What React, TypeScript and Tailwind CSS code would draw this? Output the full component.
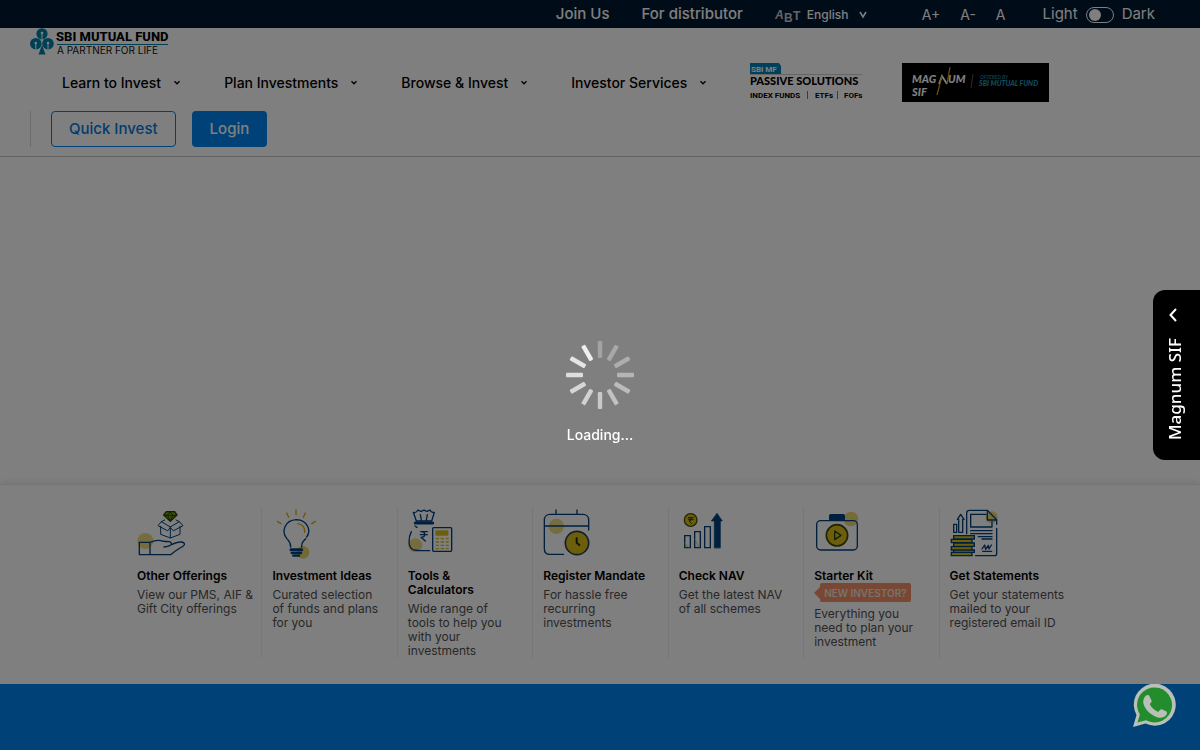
import type { ReactNode } from "react";

const NAVY = "#00407c";
const GOLD = "#d8bc14";

function Glyph({ viewBox, children }: { viewBox: string; children: ReactNode }) {
  return (
    <svg
      viewBox={viewBox}
      className="mb-3 block h-[50px] w-[50px] overflow-visible"
      fill="none"
      stroke={NAVY}
      strokeWidth="4"
      strokeLinecap="round"
      strokeLinejoin="round"
      aria-hidden="true"
    >
      {children}
    </svg>
  );
}

function OfferingsIcon() {
  return (
    <Glyph viewBox="21 24 150 150">
      <circle cx="46" cy="126" r="24" fill={GOLD} opacity=".55" stroke="none" />
      <path d="M28 130h32v37H28zM60 130c12-5 22-8 32-5 6 3 10 2 26 3 8 1 8 10 1 12-5 2-11 4-17 4M122 138c12-6 22-10 33-9 9 2 11 7 5 12-10 6-25 15-38 26H60" />
      <path d="M92 82v24l29 11 29-11V82M121 86v30M121 84L94 68 84 80l28 15zM121 84l27-16 11 12-28 15zM94 68l10-5M148 68l-10-5" strokeWidth="3" />
      <path d="M109 38h25l7 10-20 19-20-19z" fill="#7c9c10" stroke="#26400c" />
      <path d="M103 49h37M113 49l8 16 8-16-8-9z" stroke="#26400c" strokeWidth="3" />
    </Glyph>
  );
}

function IdeasIcon() {
  return (
    <Glyph viewBox="426 24 150 150">
      <circle cx="519" cy="160" r="19" fill={GOLD} opacity=".65" stroke="none" />
      <path d="M498 33v14M470 42l6 13M526 42l-6 13M442 67l11 7M556 67l-11 7" stroke="#e0a810" />
      <path d="M482 144c1-14-6-19-12-26-16-20-7-54 29-56 35 2 45 33 31 52M527 119c-8 8-13 13-12 25" />
      <path d="M503 74c14 2 22 11 21 26" stroke="#e0a810" />
      <path d="M483 152h32" strokeWidth="9" />
      <path d="M485 162h28" strokeWidth="7" />
      <path d="M490 170h17" strokeWidth="7" />
    </Glyph>
  );
}

function ToolsIcon() {
  return (
    <Glyph viewBox="21 24 150 150">
      <circle cx="43" cy="139" r="21" fill={GOLD} opacity=".55" stroke="none" />
      <path d="M46 66l-9-26c7 3 11-2 14-7 6 5 12 5 18 0 6 5 12 5 18 0 2 5 6 9 13 7l-8 26zM58 47l3 16M79 47l-3 16" />
      <path d="M43 72h52" strokeWidth="9" />
      <path d="M42 81l6 4M31 98c-9 18-10 43 2 52 6 6 20 5 53 5" />
      <path d="M59 98h20M58 107h21M60 98c15 0 15 16 0 17l13 11" />
      <rect x="95" y="86" width="57" height="71" rx="3" />
      <path d="M103 94h39v16h-39z" fill={GOLD} stroke="none" />
      <path d="M104 119h39M104 129h39M104 139h39M104 149h39" stroke={GOLD} strokeDasharray="10 5" strokeLinecap="butt" />
    </Glyph>
  );
}

function MandateIcon() {
  return (
    <Glyph viewBox="426 24 150 150">
      <circle cx="466" cy="82" r="23" fill={GOLD} opacity=".55" stroke="none" />
      <path d="M488 166h-41c-10 0-17-6-17-17V63c0-10 7-17 17-17h99c10 0 17 7 17 17v30M430 81h133M465 33v13M528 33v13" />
      <circle cx="528" cy="132" r="35" fill={GOLD} stroke="#20405c" strokeWidth="5" />
      <path d="M527 118v13l8 7" stroke="#103020" strokeWidth="6" />
    </Glyph>
  );
}

function NavIcon() {
  return (
    <Glyph viewBox="21 24 150 150">
      <circle cx="56" cy="63" r="19" fill={GOLD} stroke="#405010" />
      <path d="M49 56h15M49 62h15M51 56c11 0 11 9 0 10l8 8" stroke="#283c10" strokeWidth="3" />
      <path d="M38 110h17v36H38zM68 98h17v48H68zM98 83h17v63H98z" strokeLinejoin="miter" />
      <path d="M38 132l12 13M68 120l12 24" stroke={GOLD} opacity=".5" />
      <path d="M127 146V66h-9l17-23 16 23h-6v80z" fill={NAVY} strokeWidth="2" />
    </Glyph>
  );
}

function KitIcon() {
  return (
    <Glyph viewBox="429 24 150 150">
      <circle cx="540" cy="60" r="22" fill={GOLD} opacity=".6" stroke="none" />
      <rect x="476" y="47" width="44" height="17" rx="3" fill={NAVY} />
      <rect x="437" y="65" width="122" height="88" rx="12" />
      <circle cx="498" cy="109" r="32" fill={GOLD} stroke="#40480c" strokeWidth="5" />
      <path d="M491 96v26l19-13z" stroke="#283c10" />
    </Glyph>
  );
}

function StatementIcon() {
  return (
    <Glyph viewBox="54 24 150 150">
      <circle cx="179" cy="55" r="18" fill={GOLD} opacity=".6" stroke="none" />
      <path d="M104 104V42c0-5 3-8 8-8h54l28 28v14M194 88v76c0 4-3 6-6 6h-57M166 35v28h27" />
      <path d="M162 46h-46v38h64V68M116 95h64M116 104h64M139 113h41M150 120h30M152 157h27M150 150l8-12 3 13 8-12 2 11 7-12" />
      <path d="M65 76h9v24h-9zM80 100V61h-4l10-15 10 15h-4v39z" />
      <path d="M65 110h62v10H65zM58 121h62v10H58zM65 132h62v10H65zM58 143h62v10H58zM65 153h62v7H65zM58 160h62v10H58z" fill={GOLD} strokeLinejoin="miter" />
    </Glyph>
  );
}

type Card = { title: string; text: string; icon: () => ReactNode; badge?: string };

const cards: Card[] = [
  { title: "Other Offerings", text: "View our PMS, AIF & Gift City offerings", icon: OfferingsIcon },
  { title: "Investment Ideas", text: "Curated selection of\u00a0funds and plans for\u00a0you", icon: IdeasIcon },
  { title: "Tools & Calculators", text: "Wide range of tools\u00a0to help you with your investments", icon: ToolsIcon },
  { title: "Register Mandate", text: "For hassle free recurring investments", icon: MandateIcon },
  { title: "Check NAV", text: "Get the latest NAV of\u00a0all schemes", icon: NavIcon },
  { title: "Starter Kit", text: "Everything you need\u00a0to plan your investment", icon: KitIcon, badge: "NEW INVESTOR?" },
  { title: "Get Statements", text: "Get your statements mailed to your registered email\u00a0ID", icon: StatementIcon },
];

const menu = ["Learn to Invest", "Plan Investments", "Browse & Invest", "Investor Services"];

const spokes = [0.28, 0.32, 0.36, 0.42, 0.48, 0.52, 0.58, 0.64, 0.68, 0.74, 0.8, 0.88];

function Chevron() {
  return (
    <svg viewBox="0 0 8 6" className="h-[6px] w-2" fill="none" stroke="currentColor" strokeWidth="1.3" aria-hidden="true">
      <path d="M1.5 1.2L4 3.800l2.500-2.600" />
    </svg>
  );
}

function TopBar() {
  return (
    <div className="flex h-7 items-center justify-end bg-[#001830] pt-px pr-[45px] text-[15px] text-white">
      <a href="#join" className="mr-8 font-medium">Join Us</a>
      <a href="#distributor" className="mr-8 font-medium">For distributor</a>
      <svg viewBox="0 0 26 20" className="mr-[6px] h-5 w-[26px]" fill="#c8c8c8" aria-hidden="true">
        <g fontFamily="Liberation Sans" fontWeight="700" fontSize="12">
          <text x="0" y="14" fontStyle="italic">A</text>
          <text x="9" y="17">B</text>
          <text x="18" y="15">T</text>
        </g>
      </svg>
      <label className="relative mr-[55px] flex items-center font-medium">
        <span className="sr-only">Language</span>
        <select className="h-6 w-[60px] appearance-none bg-transparent text-xs text-white outline-none" defaultValue="English">
          <option>English</option>
        </select>
        <svg viewBox="0 0 8 8" className="pointer-events-none absolute right-0 h-2 w-2" fill="none" stroke="currentColor" strokeWidth="1.5" aria-hidden="true">
          <path d="M1 1l3 5 3-5" />
        </svg>
      </label>
      <div className="mr-[37px] flex gap-5 text-sm">
        <button type="button">A+</button>
        <button type="button">A-</button>
        <button type="button">A</button>
      </div>
      <label className="flex items-center gap-2">
        <span>Light</span>
        <span className="flex h-4 w-7 shrink-0 items-center rounded-full border border-white px-[2px]">
          <input type="checkbox" className="h-3 w-3 appearance-none rounded-full bg-white checked:ml-auto" />
        </span>
        <span>Dark</span>
      </label>
    </div>
  );
}

function FundLogo() {
  return (
    <a href="#home" aria-label="SBI Mutual Fund" className="ml-[30px] block w-[144px]">
      <svg viewBox="0 0 144 27" className="block h-[27px] w-[144px]">
        <g fill="#0080a8">
          <circle cx="12" cy="5.800" r="5.600" />
          <circle cx="5.800" cy="15.700" r="5.800" />
          <circle cx="18" cy="15.700" r="5.800" />
          <path d="M12 17l3.500 9.500h-7z" />
        </g>
        <g fill="#fff">
          <circle cx="12" cy="5" r="1.300" />
          <path d="M11.500 6h1v5.500h-1zM5.300 16h1v5.500h-1zM17.500 16h1v5.500h-1z" />
          <circle cx="5.800" cy="15" r="1.300" />
          <circle cx="18" cy="15" r="1.300" />
        </g>
        <text x="26" y="13" fontFamily="Roboto" fontWeight="800" fontSize="13" fill="#000">SBI MUTUAL FUND</text>
        <path d="M27 16.500h111" stroke="#0080a8" strokeWidth="1" />
        <text x="27" y="26" fontFamily="Inter" fontSize="10" fill="#111">A PARTNER FOR LIFE</text>
      </svg>
    </a>
  );
}

function PassiveLogo() {
  return (
    <a href="#passive" aria-label="SBI MF Passive Solutions" className="block">
      <svg viewBox="0 0 114 39" className="block h-[39px] w-[114px]">
        <path d="M0 0h29l2 3v8H0z" fill="#0080b8" />
        <g fontFamily="Roboto" fontWeight="700" fill="#000">
          <text x="1" y="9" fontSize="8" fill="#fff">SBI MF</text>
          <text x="0" y="22" fontFamily="Lato" fontWeight="900" fontSize="11">PASSIVE SOLUTIONS</text>
          <text x="0" y="35" fontSize="8">INDEX FUNDS</text>
          <text x="65" y="35" fontSize="8">ETFs</text>
          <text x="94" y="35" fontSize="8">FOFs</text>
        </g>
        <path d="M0 11.500h112" stroke="#999" strokeWidth=".5" />
        <path d="M57.500 28v8M87.500 28v8" stroke="#777" />
      </svg>
    </a>
  );
}

function MagnumLogo() {
  return (
    <a href="#magnum" aria-label="Magnum SIF" className="block bg-black">
      <svg viewBox="0 0 147 39" className="block h-[39px] w-[147px]" fontFamily="Lato" fontWeight="900" fontStyle="italic">
        <g fill="#fff" fontSize="11">
          <text x="10" y="20">MAG</text>
          <text x="46" y="20">UM</text>
          <text x="10" y="33">SIF</text>
        </g>
        <path d="M37 21l3-8 5 8" fill="none" stroke="#fff" strokeWidth="1.800" />
        <path d="M35 32l5-19M45 21l3-17" fill="none" stroke="#d8a020" strokeWidth="1.200" />
        <path d="M71 11l-2 14" stroke="#555" />
        <text x="78" y="16" fontSize="5" fill="#167090">OFFERED BY</text>
        <text x="77" y="23" fontSize="7" fill="#2098c0">SBI MUTUAL FUND</text>
      </svg>
    </a>
  );
}

function Header() {
  return (
    <header className="border-b border-[#c4c4c4] pb-[9px] text-black">
      <FundLogo />
      <nav className="mt-2 flex items-center gap-[43px] pl-[62px] text-sm font-medium">
        {menu.map((item) => (
          <button key={item} type="button" className="flex items-center gap-3 whitespace-nowrap">
            {item}
            <Chevron />
          </button>
        ))}
        <div className="flex gap-[38px]">
          <PassiveLogo />
          <MagnumLogo />
        </div>
      </nav>
      <div className="mt-[9px] ml-[30px] flex h-9 gap-4 border-l border-[#d8d8d8] pl-5 text-[15px] font-medium">
        <button type="button" className="rounded border border-[#0084f0] px-[17px] text-[#0078e0]">Quick Invest</button>
        <button type="button" className="rounded bg-[#0084f0] px-[18px] text-white">Login</button>
      </div>
    </header>
  );
}

function QuickLinks() {
  return (
    <section className="border-t border-[#ececec] pt-[22px] pb-[26px] shadow-[0_-2px_6px_rgba(0,0,0,0.08)]">
      <div className="mx-auto grid max-w-[948px] grid-cols-7">
        {cards.map(({ title, text, icon: Icon, badge }) => (
          <a
            key={title}
            href="#quick"
            className="min-h-[150px] border-l border-[#eeeeee] pl-[10px] text-xs leading-[14px] first:border-transparent"
          >
            <Icon />
            <h3 className="pr-4 font-semibold text-black">{title}</h3>
            {badge && (
              <span className="flex h-[19px] items-center">
                <svg viewBox="0 0 6 12" className="h-3 w-[6px]" fill="#f09068" aria-hidden="true">
                  <path d="M0 6l6-6v12z" />
                </svg>
                <span className="flex h-[19px] items-center rounded-xs bg-[#f09068] px-1 text-[10px] font-semibold text-[#f0e4de]">{badge}</span>
              </span>
            )}
            <p className="mt-[5px] pr-1 text-[#505050]">{text}</p>
          </a>
        ))}
      </div>
    </section>
  );
}

function LoadingOverlay() {
  return (
    <div role="status" className="fixed inset-0 z-10 flex flex-col items-center justify-center bg-black/50 pt-[35px]">
      <svg viewBox="-34 -34 68 68" className="h-[68px] w-[68px]" aria-hidden="true">
        {spokes.map((opacity, i) => (
          <rect key={i} x="-2.2" y="-34" width="4.4" height="17" rx="1" fill="#fff" opacity={opacity} transform={`rotate(${i * 30})`} />
        ))}
      </svg>
      <p className="mt-[17px] text-sm leading-[18px] font-medium text-white">Loading...</p>
    </div>
  );
}

function MagnumTab() {
  return (
    <button
      type="button"
      className="fixed top-1/2 right-0 z-20 flex h-[170px] w-[47px] -translate-y-1/2 flex-col items-center gap-4 rounded-l-xl bg-black pt-[18px] pr-1 text-white"
    >
      <svg viewBox="0 0 8 14" className="mr-1 h-[14px] w-2" fill="none" stroke="currentColor" strokeWidth="2" aria-hidden="true">
        <path d="M7 1L1.500 7 7 13" />
      </svg>
      <span className="rotate-180 font-['Noto_Sans',sans-serif] text-[17px] leading-6 font-medium [writing-mode:vertical-rl]">Magnum SIF</span>
    </button>
  );
}

function WhatsAppLink() {
  return (
    <a href="#chat" aria-label="WhatsApp" className="fixed right-6 bottom-[22px] z-20">
      <svg viewBox="0 0 44 44" className="block h-11 w-11">
        <path d="M1 43l3.500-12A21 21 0 1 1 13.500 39.500z" fill="#b8c0b8" />
        <path d="M5.500 38.500l2.400-8A17.500 17.500 0 1 1 14 36.200z" fill="#238c2c" />
        <path d="M13.500 12c1-1 3-1.500 4 .2l2 4.200c.5 1.200-.3 2-1.800 3.700 2 4 4.800 6.300 8.500 7.800 2-2.300 2.500-3 3.600-2.600l4.200 2c1.700.8 1 3-.2 4.300-2.200 2.200-5.300 2.700-8.600 1.600-7-2.400-12-7.500-13.700-13.400-.8-3 .3-6 2-7.800z" fill="#b8c0b8" />
      </svg>
    </a>
  );
}

export default function App() {
  return (
    <div className="flex min-h-screen flex-col bg-white font-['Inter','Liberation_Sans',sans-serif]">
      <TopBar />
      <Header />
      <main>
        <div className="h-[327px]" />
        <QuickLinks />
      </main>
      <footer className="flex-1 bg-[#0084f0]" />
      <LoadingOverlay />
      <MagnumTab />
      <WhatsAppLink />
    </div>
  );
}
